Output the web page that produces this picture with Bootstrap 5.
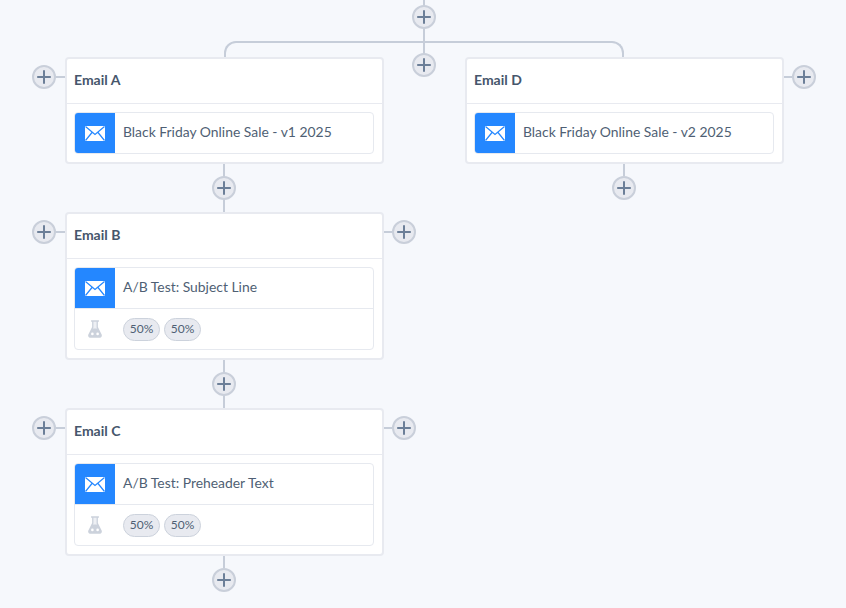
<!DOCTYPE html>
<html lang="en">
<head>
<meta charset="utf-8">
<title>Email flow</title>
<link href="https://cdn.jsdelivr.net/npm/bootstrap@5.3.0/dist/css/bootstrap.min.css" rel="stylesheet">
<style>
html,body{height:100%;}
body{background:#f6f8fc;font-family:"Lato","Open Sans","Liberation Sans",sans-serif;color:#4a5a70;overflow:hidden;}
.flow-canvas{position:relative;width:846px;height:608px;overflow:hidden;padding:57px 0 0 65px;gap:81px;}
.flow-col{width:319px;}
.flow-node{position:relative;width:319px;background:#fff;border:2px solid #e8eaf0;border-radius:4px;}
.node-head{height:45px;padding:0 7px 3px;font-size:14px;font-weight:700;color:#46566c;border-bottom:1px solid #e8eaf0;}
.node-body{padding:8px 8px 8px 7px;}
.step-box{border:1px solid #e6e9ef;border-radius:4px;overflow:hidden;}
.step-row{height:40px;}
.step-row+.step-row{border-top:1px solid #e6e9ef;height:41px;}
.step-ico{width:40px;height:100%;flex:none;}
.step-ico.is-mail{background:#2487ff;}
.step-text{padding:0 0 1px 8px;font-size:13.9px;color:#4f5f74;}
.split-pill{height:23px;padding:0;width:37px;font-size:12px;color:#4f5f74;background:#e8eaf0;border:1px solid #ccd2dc;border-radius:12px;}
.split-list{padding-left:8px;gap:4px;}
.link-v{width:2px;background:#c6cdd9;margin-right:2px;}
.link-gap{height:48px;}
.link-end{height:12px;}
.add-btn{position:absolute;z-index:2;width:24px;height:24px;padding:0;background:#e8eaf0;border:2px solid #c9cfda;border-radius:50%;}
.add-btn svg{display:block;width:20px;height:20px;}
.on-link{left:50%;top:50%;transform:translate(-50%,-50%);}
.link-slot{position:relative;}
.link-end .add-btn{top:12px;left:50%;transform:translateX(-50%);}
.side-left{left:-35px;top:6px;}
.side-right{right:-34px;top:6px;}
.stub{position:absolute;height:2px;width:10px;top:17px;background:#c6cdd9;}
.stub-left{left:-12px;}
.stub-right{right:-12px;}
.bracket{position:absolute;left:224px;top:41px;width:400px;height:16px;border:2px solid #c6cdd9;border-bottom:0;border-radius:12px 12px 0 0;}
.trunk{position:absolute;left:423px;top:0;height:65px;margin:0;}
.trunk-add-a{left:412px;top:5px;}
.trunk-add-b{left:412px;top:53px;}
</style>
</head>
<body>
<svg width="0" height="0" class="d-block position-absolute" aria-hidden="true">
<symbol id="i-plus" viewBox="0 0 20 20"><path d="M10 3.2v13.6M3.2 10h13.6" fill="none" stroke="#6c7f98" stroke-width="2"/></symbol>
<symbol id="i-mail" viewBox="0 0 20 15"><path d="M0 0h20v15H0z" fill="#fff"/><path d="M.5.5 10 8.5 19.5.5M.5 14.5 7 6.5M19.5 14.5 13 6.5" fill="none" stroke="#2487ff" stroke-width="1.2"/></symbol>
<symbol id="i-flask" viewBox="0 0 16 20"><path d="M3.5 0h9v1.8h-1.2v6l4.3 8.6c.7 1.6-.2 3.6-1.8 3.6H2.2C.6 20-.3 18 .4 16.4l4.3-8.6v-6H3.5z" fill="#ccd2dc"/><path d="M6.2 1.8h3.6v6.4l.6 1.3H5.6l.6-1.3z" fill="#eef0f4"/><circle cx="5" cy="15.6" r="1.5" fill="#fff"/><circle cx="11" cy="15.6" r="1.5" fill="#fff"/></symbol>
</svg>

<main class="flow-canvas d-flex align-items-start">
  <div class="link-v trunk"></div>
  <div class="bracket"></div>
  <button class="add-btn trunk-add-a d-flex align-items-center justify-content-center" type="button" aria-label="Add"><svg><use href="#i-plus"/></svg></button>
  <button class="add-btn trunk-add-b d-flex align-items-center justify-content-center" type="button" aria-label="Add"><svg><use href="#i-plus"/></svg></button>

  <section class="flow-col d-flex flex-column align-items-center">
    <article class="flow-node">
      <span class="stub stub-left"></span>
      <button class="add-btn side-left d-flex align-items-center justify-content-center" type="button" aria-label="Add"><svg><use href="#i-plus"/></svg></button>
      <header class="node-head d-flex align-items-center">Email A</header>
      <div class="node-body">
        <div class="step-box">
          <div class="step-row d-flex align-items-center">
            <span class="step-ico is-mail d-flex align-items-center justify-content-center"><svg width="20" height="15"><use href="#i-mail"/></svg></span>
            <span class="step-text">Black Friday Online Sale - v1 2025</span>
          </div>
        </div>
      </div>
    </article>
    <div class="link-v link-gap link-slot"><button class="add-btn on-link d-flex align-items-center justify-content-center" type="button" aria-label="Add"><svg><use href="#i-plus"/></svg></button></div>

    <article class="flow-node">
      <span class="stub stub-left"></span><span class="stub stub-right"></span>
      <button class="add-btn side-left d-flex align-items-center justify-content-center" type="button" aria-label="Add"><svg><use href="#i-plus"/></svg></button>
      <button class="add-btn side-right d-flex align-items-center justify-content-center" type="button" aria-label="Add"><svg><use href="#i-plus"/></svg></button>
      <header class="node-head d-flex align-items-center">Email B</header>
      <div class="node-body">
        <div class="step-box">
          <div class="step-row d-flex align-items-center">
            <span class="step-ico is-mail d-flex align-items-center justify-content-center"><svg width="20" height="15"><use href="#i-mail"/></svg></span>
            <span class="step-text">A/B Test: Subject Line</span>
          </div>
          <div class="step-row d-flex align-items-center">
            <span class="step-ico d-flex align-items-center justify-content-center"><svg width="14" height="18"><use href="#i-flask"/></svg></span>
            <span class="split-list d-flex"><span class="split-pill d-flex align-items-center justify-content-center">50%</span><span class="split-pill d-flex align-items-center justify-content-center">50%</span></span>
          </div>
        </div>
      </div>
    </article>
    <div class="link-v link-gap link-slot"><button class="add-btn on-link d-flex align-items-center justify-content-center" type="button" aria-label="Add"><svg><use href="#i-plus"/></svg></button></div>

    <article class="flow-node">
      <span class="stub stub-left"></span><span class="stub stub-right"></span>
      <button class="add-btn side-left d-flex align-items-center justify-content-center" type="button" aria-label="Add"><svg><use href="#i-plus"/></svg></button>
      <button class="add-btn side-right d-flex align-items-center justify-content-center" type="button" aria-label="Add"><svg><use href="#i-plus"/></svg></button>
      <header class="node-head d-flex align-items-center">Email C</header>
      <div class="node-body">
        <div class="step-box">
          <div class="step-row d-flex align-items-center">
            <span class="step-ico is-mail d-flex align-items-center justify-content-center"><svg width="20" height="15"><use href="#i-mail"/></svg></span>
            <span class="step-text">A/B Test: Preheader Text</span>
          </div>
          <div class="step-row d-flex align-items-center">
            <span class="step-ico d-flex align-items-center justify-content-center"><svg width="14" height="18"><use href="#i-flask"/></svg></span>
            <span class="split-list d-flex"><span class="split-pill d-flex align-items-center justify-content-center">50%</span><span class="split-pill d-flex align-items-center justify-content-center">50%</span></span>
          </div>
        </div>
      </div>
    </article>
    <div class="link-v link-end link-slot"><button class="add-btn d-flex align-items-center justify-content-center" type="button" aria-label="Add"><svg><use href="#i-plus"/></svg></button></div>
  </section>

  <section class="flow-col d-flex flex-column align-items-center">
    <article class="flow-node">
      <span class="stub stub-right"></span>
      <button class="add-btn side-right d-flex align-items-center justify-content-center" type="button" aria-label="Add"><svg><use href="#i-plus"/></svg></button>
      <header class="node-head d-flex align-items-center">Email D</header>
      <div class="node-body">
        <div class="step-box">
          <div class="step-row d-flex align-items-center">
            <span class="step-ico is-mail d-flex align-items-center justify-content-center"><svg width="20" height="15"><use href="#i-mail"/></svg></span>
            <span class="step-text">Black Friday Online Sale - v2 2025</span>
          </div>
        </div>
      </div>
    </article>
    <div class="link-v link-end link-slot"><button class="add-btn d-flex align-items-center justify-content-center" type="button" aria-label="Add"><svg><use href="#i-plus"/></svg></button></div>
  </section>
</main>
<script src="https://cdn.jsdelivr.net/npm/bootstrap@5.3.0/dist/js/bootstrap.bundle.min.js"></script>
</body>
</html>
